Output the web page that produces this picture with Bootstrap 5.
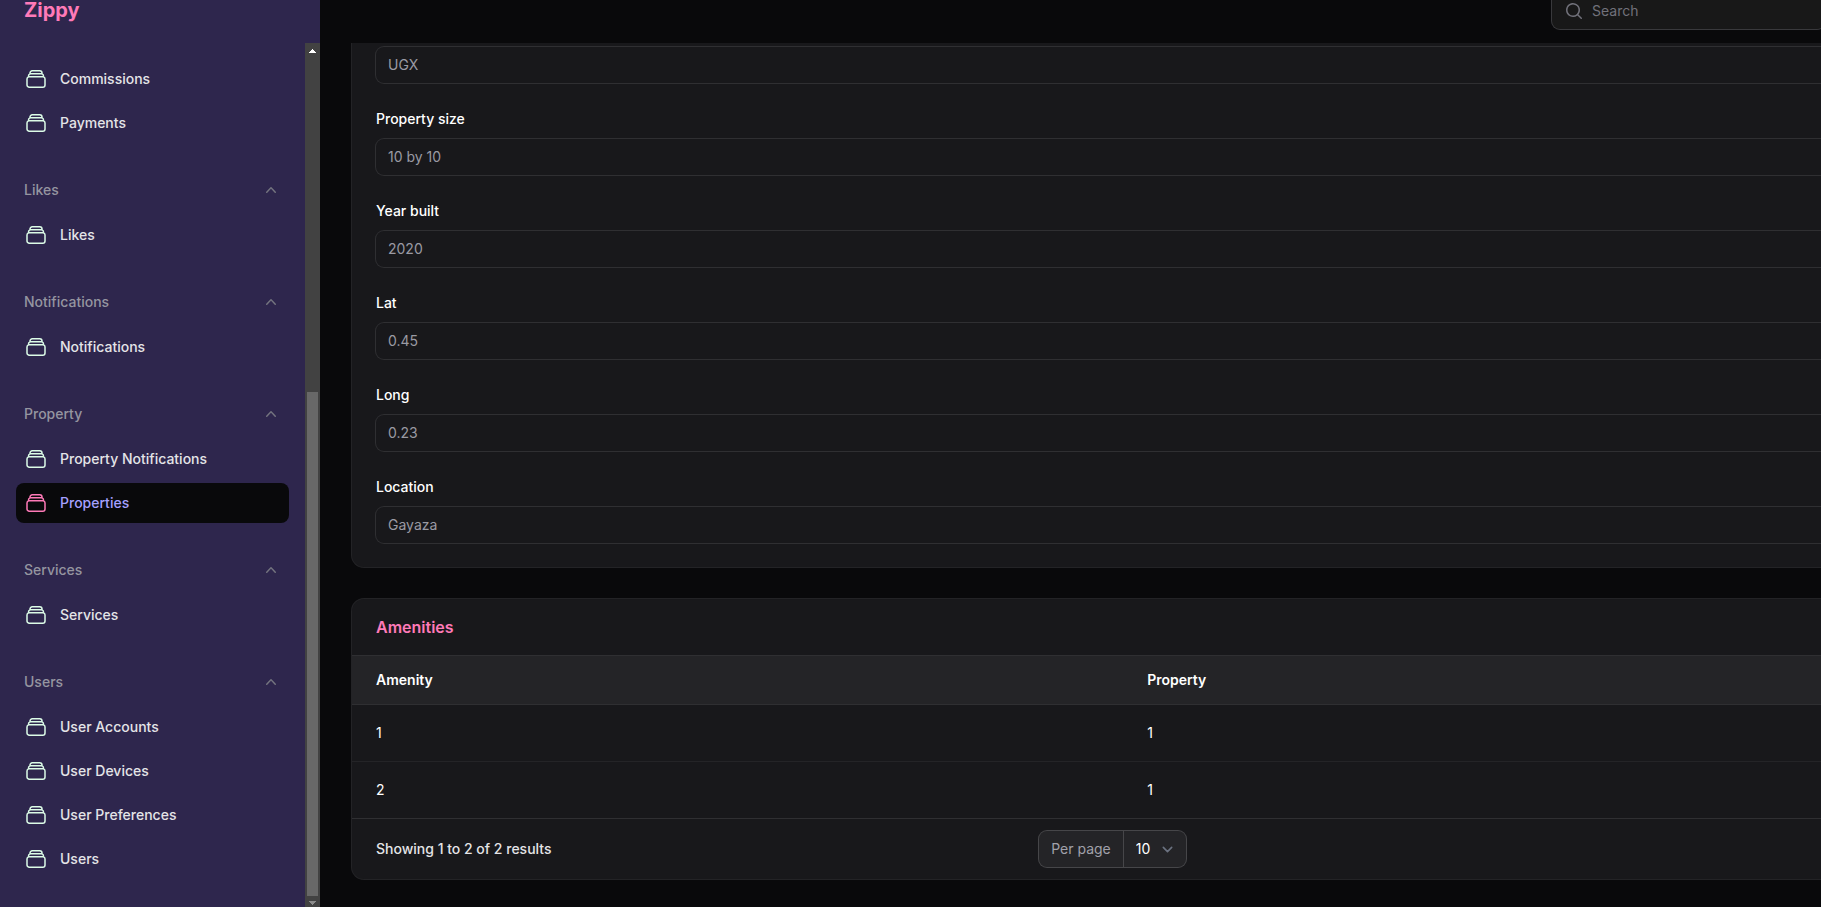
<!DOCTYPE html>
<html lang="en" data-bs-theme="dark">
<head>
<meta charset="utf-8">
<meta name="viewport" content="width=device-width, initial-scale=1">
<title>Zippy - Properties</title>
<link rel="stylesheet" href="https://cdn.jsdelivr.net/npm/bootstrap@5.3.0/dist/css/bootstrap.min.css">
<style>
  :root { --line: #2f2f32; --panel: #18181b; --page: #09090b; --pink: #ff7ab8; }
  body { background: var(--page); color: #fff; font-family: Inter, "Liberation Sans", sans-serif; font-size: 14px; line-height: 20px; overflow: hidden; }
  svg { display: block; flex: none; }
  /* The page is scrolled a little, both down and beyond its right edge */
  .app { height: calc(100vh + 21px); margin-top: -21px; margin-right: -84px; }
  .top-row { height: 64px; }
  .side { width: 320px; background: #2e264d; }
  .brand { color: var(--pink); font-size: 20px; line-height: 20px; padding-bottom: 2px; }
  .menu { padding: 16px 16px 28px; gap: 28px; }
  .menu-group ul { gap: 4px; }
  .group-toggle { height: 38px; margin-bottom: 6px; color: #9595a0; font-size: 14px; line-height: 20px; font-weight: 500; }
  .group-toggle svg { color: #74747f; }
  .menu-link { height: 40px; gap: 12px; border-radius: 8px; color: #e4e4e7; font-weight: 500; }
  .menu-link svg { color: #dcfce7; }
  .menu-link.active { background: var(--page); color: #a5a0ff; }
  .menu-link.active svg { color: var(--pink); }
  .scroll-track { width: 15px; background: #424242; padding: 6px 2px 2px; }
  .scroll-thumb { width: 11px; background: #686868; flex: 504 0 0; }
  .scroll-space { flex: 339 0 0; }
  .search-box { width: 273px; height: 36px; margin-right: 80px; padding: 0 12px; gap: 8px; border-radius: 8px; background: #181818; box-shadow: 0 0 0 1px #39393c; color: #71717a; }
  .search-box input, .search-box input:focus { background: none; border: 0; outline: 0; color: #fff; }
  .search-box input::placeholder { color: #71717a; opacity: 1; }
  .content { padding: 0 32px; gap: 32px; }
  .panel { background: var(--panel); border-radius: 12px; box-shadow: 0 0 0 1px #232326; }
  .form-panel { padding: 4px 24px 24px; gap: 24px; border-radius: 0 0 12px 12px; }
  .field-group { gap: 8px; }
  .field-group label { line-height: 24px; font-weight: 500; }
  .field { height: 36px; padding: 0 12px 2px; border: 0; border-radius: 8px; background: var(--panel); box-shadow: 0 0 0 1px var(--line); color: #9a9aa3; }
  .panel-title { font-size: 16px; line-height: 24px; padding: 16px 24px; color: var(--pink); }
  .data-table { border-collapse: separate; border-spacing: 0; }
  .data-table th { height: 49px; padding: 0 24px; background: #242427; border-top: 1px solid var(--line); font-weight: 600; }
  .data-table th:first-child { width: 50.7%; }
  .data-table td { height: 57px; padding: 0 24px; border-top: 1px solid #242427; }
  .data-table tbody tr:first-child td { border-top-color: var(--line); }
  .panel-foot { display: grid; grid-template-columns: 1fr auto 1fr; align-items: center; padding: 12px 24px; border-top: 1px solid var(--line); color: #e4e4e7; }
  .per-page { height: 36px; border-radius: 8px; background: #242427; box-shadow: 0 0 0 1px #464649; }
  .per-page label { padding: 0 12px; color: #a1a1aa; }
  .per-page select { width: 63px; height: 36px; padding: 0 12px; appearance: none; color: #fff; border: 0; border-left: 1px solid #464649; background: url("data:image/svg+xml,%3csvg xmlns='http://www.w3.org/2000/svg' fill='none' viewBox='0 0 20 20'%3e%3cpath stroke='%236b7280' stroke-linecap='round' stroke-linejoin='round' stroke-width='1.5' d='M6 8l4 4 4-4'/%3e%3c/svg%3e") right 8px center / 21px no-repeat; }
</style>
</head>
<body>
<svg class="d-none" aria-hidden="true">
  <symbol id="stack" viewBox="0 0 24 24"><path fill="none" stroke="currentColor" stroke-width="1.5" stroke-linecap="round" stroke-linejoin="round" d="M6 6.878V6a2.25 2.25 0 0 1 2.25-2.25h7.5A2.25 2.25 0 0 1 18 6v.878m-12 0c.235-.083.487-.128.75-.128h10.5c.263 0 .515.045.75.128m-12 0A2.25 2.25 0 0 0 4.5 9v.878m13.5-3A2.25 2.25 0 0 1 19.5 9v.878m0 0a2.246 2.246 0 0 0-.75-.128H5.25c-.263 0-.515.045-.75.128m15 0A2.25 2.25 0 0 1 21 12v6a2.25 2.25 0 0 1-2.25 2.25H5.25A2.25 2.25 0 0 1 3 18v-6c0-.98.626-1.813 1.5-2.122"/></symbol>
  <symbol id="up" viewBox="0 0 20 20"><path fill="currentColor" fill-rule="evenodd" d="M14.77 12.79a.75.75 0 01-1.06-.02L10 8.832 6.29 12.77a.75.75 0 11-1.08-1.04l4.25-4.5a.75.75 0 011.08 0l4.25 4.5a.75.75 0 01-.02 1.06z"/></symbol>
</svg>
<div class="app d-flex">
  <aside class="side d-flex flex-column flex-shrink-0">
    <div class="top-row d-flex align-items-center px-4 flex-shrink-0"><a href="#" class="brand fw-bold text-decoration-none">Zippy</a></div>
    <div class="d-flex flex-grow-1 overflow-hidden">
      <nav class="menu d-flex flex-column flex-grow-1" aria-label="Main">
        <div class="menu-group">
          <ul class="list-unstyled d-flex flex-column mb-0">
            <li><a href="#" class="menu-link d-flex align-items-center px-2 text-decoration-none"><svg width="24" height="24"><use href="#stack"/></svg>Commissions</a></li>
            <li><a href="#" class="menu-link d-flex align-items-center px-2 text-decoration-none"><svg width="24" height="24"><use href="#stack"/></svg>Payments</a></li>
          </ul>
        </div>
        <div class="menu-group">
          <button type="button" class="group-toggle btn border-0 d-flex align-items-center justify-content-between w-100 px-2 py-0">Likes<svg width="20" height="20"><use href="#up"/></svg></button>
          <ul class="list-unstyled d-flex flex-column mb-0">
            <li><a href="#" class="menu-link d-flex align-items-center px-2 text-decoration-none"><svg width="24" height="24"><use href="#stack"/></svg>Likes</a></li>
          </ul>
        </div>
        <div class="menu-group">
          <button type="button" class="group-toggle btn border-0 d-flex align-items-center justify-content-between w-100 px-2 py-0">Notifications<svg width="20" height="20"><use href="#up"/></svg></button>
          <ul class="list-unstyled d-flex flex-column mb-0">
            <li><a href="#" class="menu-link d-flex align-items-center px-2 text-decoration-none"><svg width="24" height="24"><use href="#stack"/></svg>Notifications</a></li>
          </ul>
        </div>
        <div class="menu-group">
          <button type="button" class="group-toggle btn border-0 d-flex align-items-center justify-content-between w-100 px-2 py-0">Property<svg width="20" height="20"><use href="#up"/></svg></button>
          <ul class="list-unstyled d-flex flex-column mb-0">
            <li><a href="#" class="menu-link d-flex align-items-center px-2 text-decoration-none"><svg width="24" height="24"><use href="#stack"/></svg>Property Notifications</a></li>
            <li><a href="#" class="menu-link active d-flex align-items-center px-2 text-decoration-none" aria-current="page"><svg width="24" height="24"><use href="#stack"/></svg>Properties</a></li>
          </ul>
        </div>
        <div class="menu-group">
          <button type="button" class="group-toggle btn border-0 d-flex align-items-center justify-content-between w-100 px-2 py-0">Services<svg width="20" height="20"><use href="#up"/></svg></button>
          <ul class="list-unstyled d-flex flex-column mb-0">
            <li><a href="#" class="menu-link d-flex align-items-center px-2 text-decoration-none"><svg width="24" height="24"><use href="#stack"/></svg>Services</a></li>
          </ul>
        </div>
        <div class="menu-group">
          <button type="button" class="group-toggle btn border-0 d-flex align-items-center justify-content-between w-100 px-2 py-0">Users<svg width="20" height="20"><use href="#up"/></svg></button>
          <ul class="list-unstyled d-flex flex-column mb-0">
            <li><a href="#" class="menu-link d-flex align-items-center px-2 text-decoration-none"><svg width="24" height="24"><use href="#stack"/></svg>User Accounts</a></li>
            <li><a href="#" class="menu-link d-flex align-items-center px-2 text-decoration-none"><svg width="24" height="24"><use href="#stack"/></svg>User Devices</a></li>
            <li><a href="#" class="menu-link d-flex align-items-center px-2 text-decoration-none"><svg width="24" height="24"><use href="#stack"/></svg>User Preferences</a></li>
            <li><a href="#" class="menu-link d-flex align-items-center px-2 text-decoration-none"><svg width="24" height="24"><use href="#stack"/></svg>Users</a></li>
          </ul>
        </div>
      </nav>
      <div class="scroll-track d-flex flex-column align-items-center flex-shrink-0" aria-hidden="true">
        <svg width="7" height="4" shape-rendering="crispEdges"><path fill="#fff" d="M3 0h1v1h1v1h1v1h1v1H0V3h1V2h1V1h1z"/></svg>
        <div class="scroll-space"></div>
        <div class="scroll-thumb"></div>
        <svg class="mt-1" width="7" height="5" shape-rendering="crispEdges"><path fill="#8b8b8b" d="M0 1h7v1H6v1H5v1H4v1H3V4H2V3H1V2H0z"/></svg>
      </div>
    </div>
  </aside>
  <div class="d-flex flex-column flex-grow-1">
    <header class="top-row d-flex align-items-center justify-content-end flex-shrink-0">
      <div class="search-box d-flex align-items-center">
        <svg width="20" height="20" viewBox="0 0 20 20"><path fill="currentColor" fill-rule="evenodd" d="M9 3.5a5.5 5.5 0 100 11 5.5 5.5 0 000-11zM2 9a7 7 0 1112.452 4.391l3.328 3.329a.75.75 0 11-1.06 1.06l-3.329-3.328A7 7 0 012 9z"/></svg>
        <input type="search" class="w-100 p-0" placeholder="Search" aria-label="Search">
      </div>
    </header>
    <main class="content d-flex flex-column flex-grow-1 overflow-hidden">
      <form class="panel form-panel d-flex flex-column">
        <input class="field w-100" type="text" value="UGX" aria-label="Currency" disabled>
        <div class="field-group d-flex flex-column"><label for="size">Property size</label><input class="field w-100" id="size" type="text" value="10 by 10" disabled></div>
        <div class="field-group d-flex flex-column"><label for="year">Year built</label><input class="field w-100" id="year" type="text" value="2020" disabled></div>
        <div class="field-group d-flex flex-column"><label for="lat">Lat</label><input class="field w-100" id="lat" type="text" value="0.45" disabled></div>
        <div class="field-group d-flex flex-column"><label for="long">Long</label><input class="field w-100" id="long" type="text" value="0.23" disabled></div>
        <div class="field-group d-flex flex-column"><label for="location">Location</label><input class="field w-100" id="location" type="text" value="Gayaza" disabled></div>
      </form>
      <section class="panel">
        <h2 class="panel-title fw-semibold mb-0">Amenities</h2>
        <table class="data-table w-100">
          <thead><tr><th scope="col">Amenity</th><th scope="col">Property</th></tr></thead>
          <tbody>
            <tr><td>1</td><td>1</td></tr>
            <tr><td>2</td><td>1</td></tr>
          </tbody>
        </table>
        <div class="panel-foot">
          <span class="fw-medium">Showing 1 to 2 of 2 results</span>
          <div class="per-page d-flex align-items-center">
            <label for="per-page">Per page</label>
            <select id="per-page"><option>10</option><option>25</option><option>50</option></select>
          </div>
        </div>
      </section>
    </main>
  </div>
</div>
<script src="https://cdn.jsdelivr.net/npm/bootstrap@5.3.0/dist/js/bootstrap.bundle.min.js"></script>
</body>
</html>
